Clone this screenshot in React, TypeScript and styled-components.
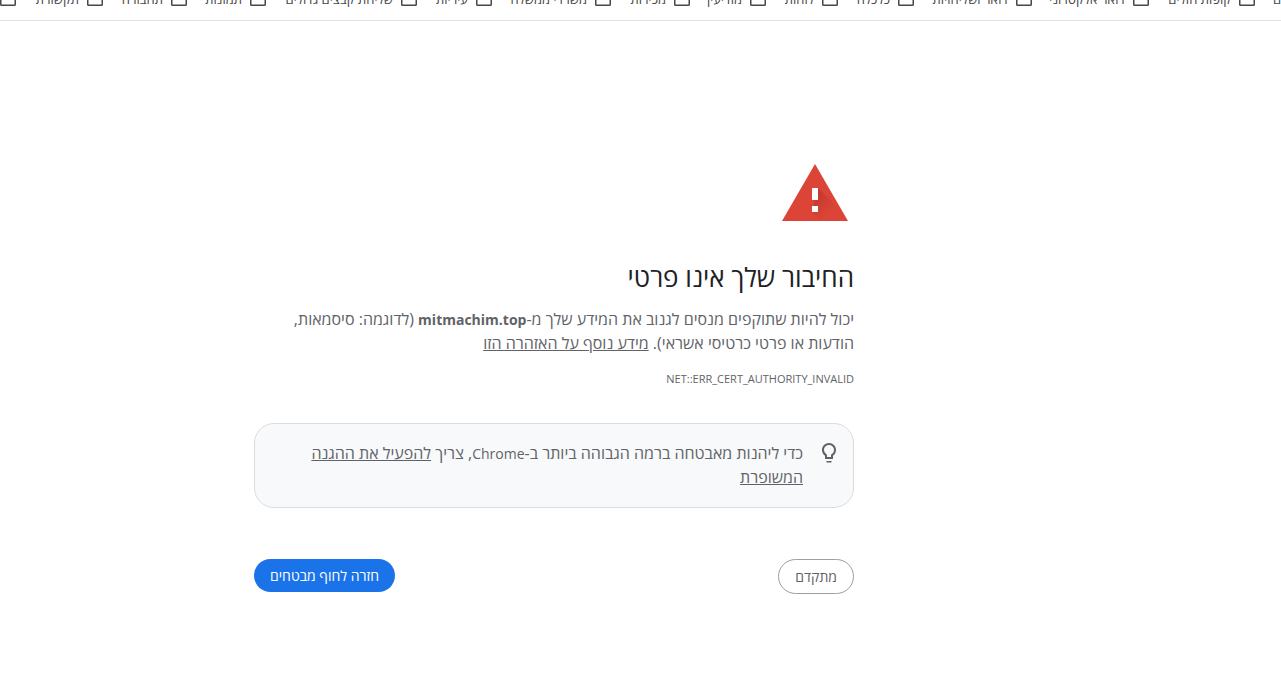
import React from 'react';
import styled, { createGlobalStyle } from 'styled-components';

const GlobalStyle = createGlobalStyle`
  *, *::before, *::after { box-sizing: border-box; }
  body {
    margin: 0;
    background: #fff;
    color: #5f6368;
    font-family: 'Open Sans', 'Noto Sans', 'Liberation Sans', sans-serif;
    font-size: 16px;
    line-height: 24px;
  }
`;

const Page = styled.div`
  direction: rtl;
  overflow-x: hidden;
`;

const BookmarksBar = styled.nav`
  display: flex;
  align-items: flex-end;
  height: 21px;
  padding-bottom: 14px;
  overflow: hidden;
  border-bottom: 1px solid #dfe1e0;
`;

const Bookmark = styled.a<{ $width: number }>`
  display: flex;
  flex: 0 0 ${({ $width }) => $width}px;
  align-items: flex-end;
  gap: 8px;
  height: 16px;
  color: #474747;
  font-size: 13px;
  line-height: 14px;
  white-space: nowrap;
  text-decoration: none;

  svg { flex: none; }
`;

const ClippedBookmark = styled(Bookmark)`
  justify-content: flex-end;
  padding-inline-end: 18px;
  overflow: hidden;
`;

const Main = styled.main`
  width: 600px;
  max-width: 66%;
  margin-inline-start: 33.333%;
  padding-top: 139px;
`;

const WarningIcon = styled.svg`
  display: block;
  width: 78px;
  height: 66px;
`;

const Title = styled.h1`
  margin: 35px 0 14px;
  color: #202124;
  font-size: 26px;
  font-weight: 400;
  line-height: 32px;
`;

const Message = styled.p`
  margin: 0;
`;

const Latin = styled.span`
  font-size: 14px;
  line-height: 1;
`;

const TextLink = styled.a`
  color: inherit;
  text-decoration: underline;
`;

const ErrorCode = styled.div`
  margin-top: 12px;
  font-size: 11px;
`;

const Tip = styled.section`
  display: flex;
  gap: 14px;
  margin-top: 32px;
  padding: 17px 12px 18px;
  border: 1px solid #dadce0;
  border-radius: 20px;
  background: #f8f9fb;

  svg { flex: none; }
`;

const Actions = styled.div`
  display: flex;
  align-items: flex-start;
  justify-content: space-between;
  margin-top: 51px;
`;

const Button = styled.button<{ $primary?: boolean }>`
  padding: 8px 16px;
  border: ${({ $primary }) => ($primary ? '0' : '1px solid #9aa0a6')};
  border-radius: 20px;
  background: ${({ $primary }) => ($primary ? '#1a73e8' : '#fff')};
  color: ${({ $primary }) => ($primary ? '#fff' : '#5f6368')};
  font-family: inherit;
  font-size: 14px;
  line-height: 17px;
  cursor: pointer;
`;

const bookmarks = [
  { label: 'קופות חולים', width: 106 },
  { label: 'דואר אלקטרוני', width: 117 },
  { label: 'דואר ושליחויות', width: 118 },
  { label: 'כלכלה', width: 76 },
  { label: 'לוחות', width: 72 },
  { label: 'מודיעין', width: 76 },
  { label: 'מכירות', width: 79 },
  { label: 'משרדי ממשלה', width: 119 },
  { label: 'עיריות', width: 75 },
  { label: 'שליחת קבצים גדולים', width: 151 },
  { label: 'תמונות', width: 79 },
  { label: 'תחבורה', width: 84 },
  { label: 'תקשורת', width: 87 },
  { label: '', width: 16 },
];

function FolderIcon() {
  return (
    <svg width="16" height="16" viewBox="0 0 16 16" fill="none" stroke="#474747" strokeWidth="1.5" aria-hidden="true">
      <path d="M.75 3.5V14.5q0 .75.75.75h13q.75 0 .75-.75V5q0-1.25-1.25-1.25H8L6 1.75H2Q.75 1.75.75 3.5Z" />
    </svg>
  );
}

export default function App() {
  return (
    <Page lang="he">
      <GlobalStyle />
      <BookmarksBar>
        <ClippedBookmark href="#" $width={26}>לימודים</ClippedBookmark>
        {bookmarks.map(({ label, width }) => (
          <Bookmark key={label} href="#" $width={width}>
            <FolderIcon />
            {label}
          </Bookmark>
        ))}
      </BookmarksBar>
      <Main>
        <WarningIcon viewBox="0 0 78 66" aria-hidden="true">
          <defs>
            <linearGradient id="shade" gradientUnits="userSpaceOnUse" x1="38" y1="36" x2="54" y2="52">
              <stop offset="0" stopColor="#b8352a" stopOpacity=".7" />
              <stop offset="1" stopColor="#b8352a" stopOpacity="0" />
            </linearGradient>
          </defs>
          <path d="M39 4 72 61H6Z" fill="#db4437" />
          <path d="m42 28 21 21 7 12H45l-9-9Z" fill="url(#shade)" />
          <path d="M36 28h6v12h-6zM36 46h6v6h-6z" fill="#fff" />
        </WarningIcon>
        <Title>החיבור שלך אינו פרטי</Title>
        <Message>
          יכול להיות שתוקפים מנסים לגנוב את המידע שלך מ-<Latin as="strong">mitmachim.top</Latin> (לדוגמה: סיסמאות, הודעות או פרטי כרטיסי אשראי). <TextLink href="#">מידע נוסף על האזהרה הזו</TextLink>
        </Message>
        <ErrorCode>NET::ERR_CERT_AUTHORITY_INVALID</ErrorCode>
        <Tip>
          <svg width="24" height="24" viewBox="0 0 24 24" fill="#5f6368" aria-hidden="true">
            <path d="M9.5 20h5v1.5h-5zM12 2C8.14 2 5 5.14 5 9c0 2.38 1.19 4.47 3 5.74V18h8v-3.26c1.81-1.27 3-3.36 3-5.74 0-3.86-3.14-7-7-7zm2.85 11.1-.85.6V16h-4v-2.3l-.85-.6A4.997 4.997 0 0 1 7 9c0-2.76 2.24-5 5-5s5 2.24 5 5c0 1.63-.8 3.16-2.15 4.1z" />
          </svg>
          <Message>
            כדי ליהנות מאבטחה ברמה הגבוהה ביותר ב-<Latin>Chrome</Latin>, צריך <TextLink href="#">להפעיל את ההגנה המשופרת</TextLink>
          </Message>
        </Tip>
        <Actions>
          <Button type="button">מתקדם</Button>
          <Button type="button" $primary>חזרה לחוף מבטחים</Button>
        </Actions>
      </Main>
    </Page>
  );
}
